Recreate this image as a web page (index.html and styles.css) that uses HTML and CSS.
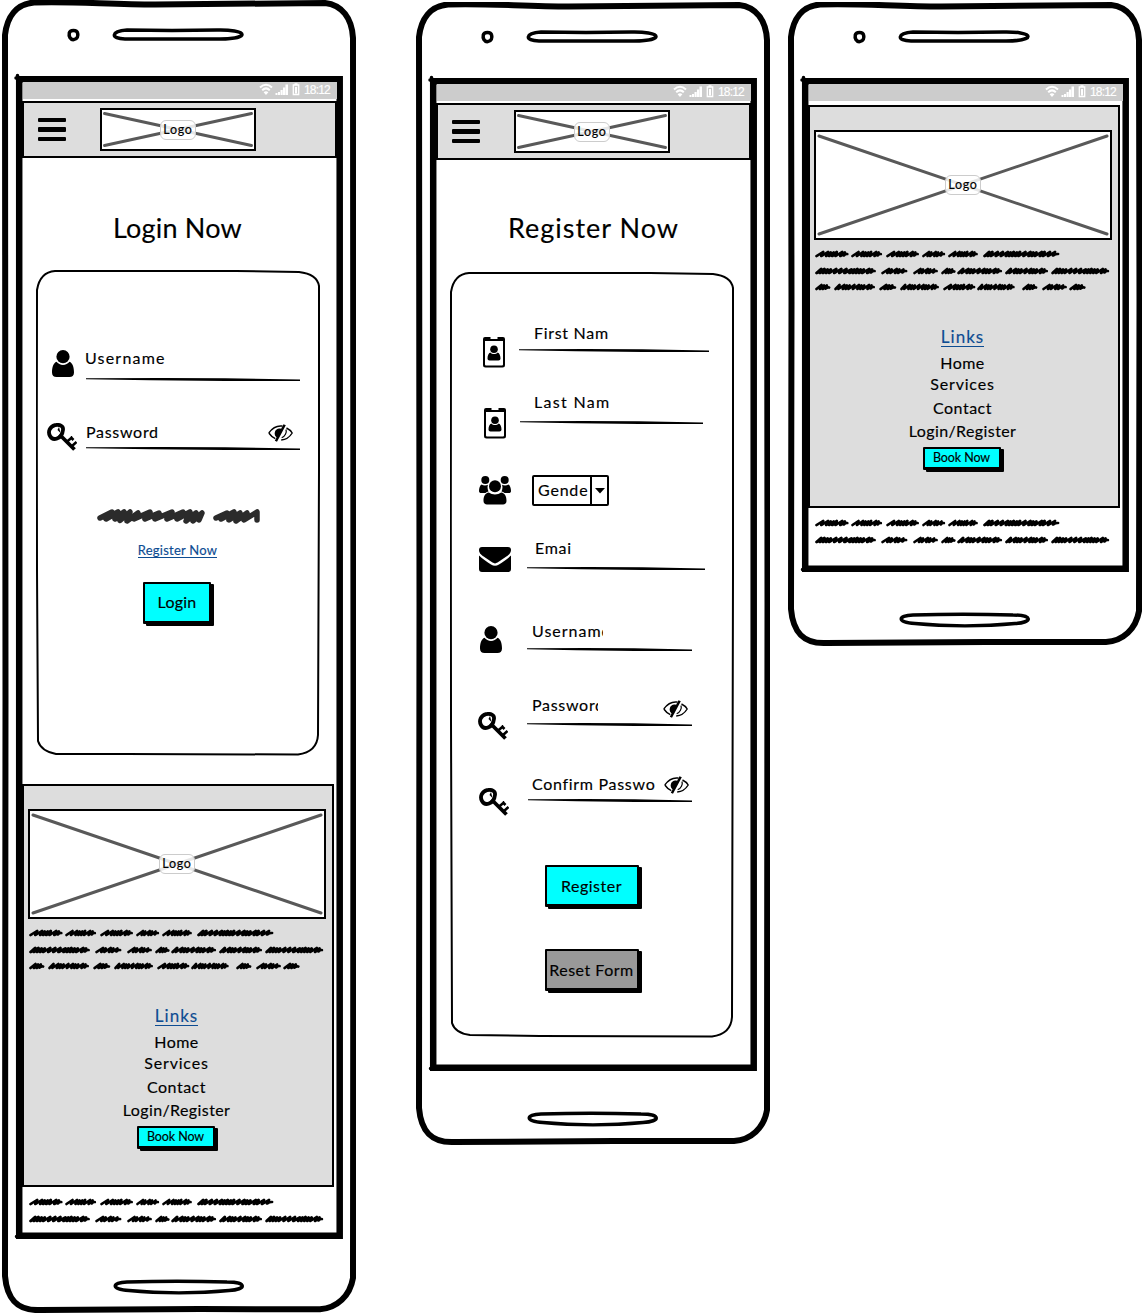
FILE: index.html
```html
<!DOCTYPE html>
<html lang="en">
<head>
<meta charset="utf-8">
<title>Mobile wireframes</title>
<link rel="stylesheet" href="styles.css">
</head>
<body>
<svg class="defs" width="0" height="0" aria-hidden="true">
  <defs>
    <path id="w15" d="M1.500 7l5-4-1.500 4 4-3.500-1.200 3.500 4-3.500-1.200 3.200q1.500-1.700 3.500-1.200"/>
    <path id="w24" d="M1.500 7l6-4-1.500 4 4-3.500-1.200 3.500 6-4-1.500 4 4-3.500-1.200 3.500 5-3.500-1 3q1.500-1.700 3.500-1.500"/>
    <path id="w31" d="M1.500 7l6-4-1.500 4 6-4-1.500 4 4-3.500-1.200 3.500 4-3.500-1.200 3.500 4-4-1 4 6-4-1.500 4 4-3.500-1 3q1.500-1.700 3.200-1.500"/>
    <path id="w42" d="M1.500 7l4-4-1.200 4 6-4-1.500 4 4-3.500-1.200 3.500 4-3.500-1.200 3.500 6-4-1.500 4 6-4-1.500 4 4-3.500-1.200 3.500 4-3.500-1.200 3.500 6-4-1.500 4 4-3.500-1 3q1.500-1.700 3.200-1.500"/>
    <path id="w58" d="M1.500 7l4-4-1.200 4 4-4-1.200 4 4-3.500-1.200 3.500 4-3.500-1.200 3.500 6-4-1.500 4 6-4-1.500 4 6-4-1.500 4 6-3.500-1.500 3.500 4-3.500-1.200 3.500 4-4-1.200 4 4-3.500-1.200 3.500 4-3.500-1.200 3.500 6-4-1.500 4 4-3.500-1 3q1.500-1.700 3.200-1.500"/>
    <path id="w76" d="M1.500 7l4-4-1.200 4 4-4-1.200 4 6-4-1.500 4 6-4-1.500 4 6-4-1.500 4 4-3.500-1.200 3.500 4-4-1.200 4 4-3.500-1.200 3.500 4-4-1.200 4 6-4-1.500 4 6-4-1.500 4 4-3.500-1.200 3.500 4-3.500-1.200 3.500 6-4-1.500 4 4-4-1.200 4 6-4-1.500 4 6-4-1.500 3.500q2-1.700 4.200-1.500"/>
    <symbol id="lines2" viewBox="0 0 296 26">
      <g fill="none" stroke="#000" stroke-width="2.700" stroke-linecap="round" stroke-linejoin="round">
        <use href="#w31" transform="scale(1.080 1)"/>
        <use href="#w31" transform="translate(36)"/>
        <use href="#w31" transform="translate(71) scale(1.060 1)"/>
        <use href="#w24" transform="translate(107) scale(.930 1)"/>
        <use href="#w31" transform="translate(133) scale(.960 1)"/>
        <use href="#w76" transform="translate(168) scale(1.120 1)"/>
        <use href="#w58" transform="translate(0 17) scale(1.130 1)"/>
        <use href="#w24" transform="translate(66 17) scale(1.060 1)"/>
        <use href="#w24" transform="translate(98 17)"/>
        <use href="#w15" transform="translate(126 17) scale(.950 1)"/>
        <use href="#w42" transform="translate(142 17) scale(1.100 1)"/>
        <use href="#w42" transform="translate(190 17) scale(1.050 1)"/>
        <use href="#w58" transform="translate(236 17) scale(1.080 1)"/>
      </g>
    </symbol>
    <symbol id="lines3" viewBox="0 0 296 43">
      <use href="#lines2" width="296" height="26"/>
      <g fill="none" stroke="#000" stroke-width="2.700" stroke-linecap="round" stroke-linejoin="round">
        <use href="#w15" transform="translate(0 33)"/>
        <use href="#w42" transform="translate(19 33)"/>
        <use href="#w15" transform="translate(64 33) scale(1.120 1)"/>
        <use href="#w42" transform="translate(85 33) scale(.950 1)"/>
        <use href="#w31" transform="translate(128 33) scale(1.040 1)"/>
        <use href="#w42" transform="translate(162 33) scale(.920 1)"/>
        <use href="#w15" transform="translate(207 33)"/>
        <use href="#w24" transform="translate(227 33)"/>
        <use href="#w15" transform="translate(254 33) scale(1.080 1)"/>
      </g>
    </symbol>
    <symbol id="user" viewBox="0 0 22 27">
      <circle cx="11" cy="6.700" r="6.600"/>
      <path d="M4.500 11.800C1.500 13 0 17 0 22.500 0 25.500 1.800 27 4.500 27h13c2.700 0 4.500-1.500 4.500-4.500 0-5.500-1.500-9.500-4.500-10.700-1.500 2-4 3.200-6.500 3.200s-5-1.200-6.500-3.200z"/>
    </symbol>
    <symbol id="key" viewBox="0 0 30 28">
      <g fill="none" stroke="#000">
        <path d="M3 13C.5 8.500 3 3.500 8 2.200c4.500-1.200 8.500 1 8 4.500-.4 4-2.500 7.500-6 8.800-2.800 1-5.600 0-7-2.500z" stroke-width="3.800"/>
        <path d="M12.500 11.500L27.500 26.500" stroke-width="3.800"/>
        <path d="M19.500 19l6-5M24.500 23.500l5-4.500M23.500 14l3 3" stroke-width="2.600"/>
      </g>
      <path d="M12 4l1.500 6-3-3z"/>
    </symbol>
    <symbol id="badge" viewBox="0 0 22 32">
      <path fill-rule="evenodd" d="M2 1h5.500v2h7V1H20a2 2 0 0 1 2 2V29a2.500 2.500 0 0 1-2.500 2.500h-17A2.500 2.500 0 0 1 0 29V3a2 2 0 0 1 2-2zM2 5V28.500a1 1 0 0 0 1 1h16a1 1 0 0 0 1-1V5z"/>
      <circle cx="11" cy="13.200" r="3.800"/>
      <path d="M7.300 16.500c-1.800.7-2.800 3-2.800 6 0 1.300.8 2 2 2h9c1.200 0 2-.7 2-2 0-3-1-5.300-2.800-6-2 2-5.400 2-7.400 0z"/>
    </symbol>
    <symbol id="users" viewBox="0 0 32 30">
      <circle cx="6.300" cy="5" r="4"/><circle cx="25.700" cy="5" r="4"/>
      <path d="M2.500 9.500C.8 10.500 0 13.500 0 16c0 1.400 1 2 2 2h4.500c.8-.9 1.800-1.400 3-1.600-1-2-1.300-4.400-.5-6.600-2 1-4.500 1-6.500-.3zM29.500 9.500c1.700 1 2.500 4 2.500 6.500 0 1.400-1 2-2 2h-4.500c-.8-.9-1.800-1.400-3-1.600 1-2 1.300-4.400.5-6.600 2 1 4.500 1 6.500-.3z"/>
      <circle cx="16" cy="11.200" r="6"/>
      <path d="M9.800 17.500C6 18 4.500 21.500 4.500 26c0 2.300 1.500 3.500 3.500 3.500h16c2 0 3.500-1.200 3.500-3.500 0-4.500-1.500-8-5.300-8.500-3.500 2.500-8.900 2.500-12.400 0z"/>
    </symbol>
    <symbol id="mail" viewBox="0 0 32 25">
      <path d="M3 0h26a3 3 0 0 1 3 3c0 2.500-1.500 4.300-3.500 5.700L18.500 15.600c-1.800 1.100-3.200 1.100-5 0L3.500 8.700C1.500 7.300 0 5.500 0 3a3 3 0 0 1 3-3z"/>
      <path d="M0 8.500c3.500 3.500 8 6.300 12 9 2.700 1.600 5.300 1.600 8 0 4-2.700 8.500-5.500 12-9V22a3 3 0 0 1-3 3H3a3 3 0 0 1-3-3z"/>
    </symbol>
    <symbol id="eye" viewBox="0 0 25 18">
      <path d="M.8 9C4 4.500 8 2 12.500 2h2M.8 9c1.800 2.600 4 4.500 6.500 5.700M18.500 4C21 5.200 23 7 24.200 9c-2.500 4-6.500 6.700-11 7" fill="none" stroke="#000" stroke-width="1.400"/>
      <path d="M15.500.2l2.300 1L9 17.800l-2.200-1z"/>
      <path d="M12.500 4.500c-4 0-5.800 2-5.800 5 0 2 .9 3.500 2.500 4.300l4.500-8.300z"/>
      <path d="M18 5.500c1 3-1 6.800-4.300 8.300" fill="none" stroke="#000" stroke-width="1.200"/>
    </symbol>
    <symbol id="rule" viewBox="0 0 200 3">
      <path d="M0 .3L70 0l60 .2L200 1.400V3H130L60 2.200 0 1.200z"/>
    </symbol>
    <symbol id="status" viewBox="0 0 42 13">
      <g fill="none" stroke="#fff" stroke-width="2">
        <path d="M1 4.500q6-5.500 12 0M3.200 7.200q3.800-3.700 7.600 0"/>
      </g>
      <path fill="#fff" d="M4.600 9.200q2.400-2 4.800 0L7 12zM16.500 10h2v2h-2zM19 9h2v3h-2zM21.500 7h2.200v5h-2.200zM24 4.500h2.200V12H24zM26.500 1.500H29V12h-2.500z"/>
      <path d="M34.300 2h5.400v9.500h-5.400zM35.500 1h3" fill="none" stroke="#fff" stroke-width="1.300"/>
      <path fill="#fff" d="M36 4h2v6.500h-2z"/>
    </symbol>
    <symbol id="phone-top" viewBox="0 0 356 80">
      <g fill="none" stroke="#000" stroke-width="3.500">
        <path d="M69.300 33c.8-3.500 7.500-3.500 8.300 0 .8 3-.2 6-3.800 6.600-3.600.4-5.200-3.400-4.500-6.600z"/>
        <path d="M127 30q45 .8 90 0c13-.3 25 1.200 25 4.500 0 3-12 4.500-22 4.500h-95c-15 0-14-8.200 2-9z"/>
      </g>
    </symbol>
    <symbol id="phone-home" viewBox="0 0 356 30">
      <path d="M127 11q50-1.500 100 0c20 0 20 7.500 2 8.500-30 3-70 3-100 0-18-.8-18-8-2-8.500z" fill="none" stroke="#000" stroke-width="3.500"/>
    </symbol>
  </defs>
</svg>

<main class="board">

  <section class="phone phone-login">
    <svg class="frame" viewBox="0 0 356 1313" width="356" height="1313">
      <g fill="none" stroke="#000">
        <path d="M5 35C7 17 16 4 34 2.500C70 1 110 4.500 155 4.500L325 3C342 5 352 18 353 38L353.500 700 353 1278C350 1296 337 1308 320 1309.300L200 1309 40 1310C17 1311 7 1299 5 1276L5.500 700z" stroke-width="6"/>
        <path d="M19.200 79.200H339.700V1235.700H19.200z" stroke-width="6.500"/>
        <path d="M16 78h4M17.500 75.500v4M16.500 1236.500h4" stroke-width="3.500" stroke-linecap="round"/>
      </g>
      <use href="#phone-top" width="356" height="80"/>
      <use href="#phone-home" y="1271" width="356" height="30"/>
    </svg>
    <div class="screen">
      <div class="statusbar"><svg width="42" height="13"><use href="#status"/></svg><span>18:12</span></div>
      <header class="topbar">
        <div class="menu"><i></i><i></i><i></i></div>
        <div class="logo logo-small">
          <svg viewBox="0 0 150 38" preserveAspectRatio="none"><path d="M2.500 3.500L147.500 34.500M147.500 3.500L2.500 34.500"/></svg>
          <span>Logo</span>
        </div>
      </header>
      <h1 class="title title-login">Login Now</h1>
      <div class="card card-login">
        <svg class="outline" viewBox="0 0 284 486"><path d="M1 20Q4 2 19 1L200 1 263 2Q281 4 283 16L283 200 282 465Q281 482 262 484.500L90 484 20 484Q5 481 2 471L1 300 .8 150z"/></svg>
        <div class="row l-user">
          <svg width="22" height="27"><use href="#user"/></svg>
          <div class="field"><span>Username</span><svg preserveAspectRatio="none" viewBox="0 0 200 3"><use href="#rule" width="200" height="3"/></svg></div>
        </div>
        <div class="row l-pass">
          <svg width="30" height="28"><use href="#key"/></svg>
          <div class="field"><div class="line"><span class="t-pass">Password</span><svg class="eye" width="25" height="18"><use href="#eye"/></svg></div><svg preserveAspectRatio="none" viewBox="0 0 200 3"><use href="#rule" width="200" height="3"/></svg></div>
        </div>
        <svg class="note" width="163" height="18" viewBox="0 0 163 18">
          <path d="M3 11L15 5 9 12 21 5 18 12 27 5 23 13.500 33 5 30 14 41 6 37 12 53 5 48 12 62 6 58 12 75 5 70 12 86 5 80 12 93 5 89 14 99 6 96 14 105 6 102 13M119 11L130 6 124 12 137 5 132 13 143 6 139 14 150 6 147 13 160 5V13"/>
        </svg>
        <a class="register-link">Register Now</a>
        <button class="btn btn-login">Login</button>
      </div>
      <footer class="footer footer-login">
        <div class="logo logo-large">
          <svg viewBox="0 0 294 106" preserveAspectRatio="none"><path d="M3 4L291 102M291 4L3 102"/></svg>
          <span>Logo</span>
        </div>
        <svg class="blurb" width="296" height="43"><use href="#lines3"/></svg>
        <nav class="links">
          <a class="links-head">Links</a>
          <a class="n-home">Home</a><a class="n-services">Services</a><a class="n-contact">Contact</a><a class="n-login">Login/Register</a>
        </nav>
        <button class="btn btn-book">Book Now</button>
      </footer>
      <svg class="legal" width="296" height="26"><use href="#lines2"/></svg>
    </div>
  </section>

  <section class="phone phone-register">
    <svg class="frame" viewBox="0 0 356 1145" width="356" height="1145">
      <g fill="none" stroke="#000">
        <path d="M5 35C7 17 16 4 34 2.500C70 1 110 4.500 155 4.500L325 3C342 5 352 18 353 38L353.500 600 353 1108C350 1126 337 1138 320 1139L200 1139 40 1140C17 1141 7 1129 5 1106L5.500 600z" stroke-width="6"/>
        <path d="M19.200 79.200H339.700V1065.700H19.200z" stroke-width="6.500"/>
        <path d="M16 78h4M17.500 75.500v4M16.500 1066.500h4" stroke-width="3.500" stroke-linecap="round"/>
      </g>
      <use href="#phone-top" width="356" height="80"/>
      <use href="#phone-home" y="1101" width="356" height="30"/>
    </svg>
    <div class="screen">
      <div class="statusbar"><svg width="42" height="13"><use href="#status"/></svg><span>18:12</span></div>
      <header class="topbar">
        <div class="menu"><i></i><i></i><i></i></div>
        <div class="logo logo-small">
          <svg viewBox="0 0 150 38" preserveAspectRatio="none"><path d="M2.500 3.500L147.500 34.500M147.500 3.500L2.500 34.500"/></svg>
          <span>Logo</span>
        </div>
      </header>
      <h1 class="title title-register">Register Now</h1>
      <div class="card card-register">
        <svg class="outline" viewBox="0 0 284 766"><path d="M1 20Q4 2 19 1L200 1 263 2Q281 4 283 16L283 300 282 745Q281 762 262 764.500L90 764 20 763Q5 761 2 751L1 450 .8 250z"/></svg>
        <div class="row r-first">
          <svg width="22" height="32"><use href="#badge"/></svg>
          <div class="field"><span>First Nam</span><svg preserveAspectRatio="none" viewBox="0 0 200 3"><use href="#rule" width="200" height="3"/></svg></div>
        </div>
        <div class="row r-last">
          <svg width="22" height="32"><use href="#badge"/></svg>
          <div class="field"><span>Last Nam</span><svg preserveAspectRatio="none" viewBox="0 0 200 3"><use href="#rule" width="200" height="3"/></svg></div>
        </div>
        <div class="row r-gender">
          <svg width="32" height="30"><use href="#users"/></svg>
          <div class="select"><span>Gende</span><b><svg width="10" height="6"><path d="M0 0h10L5 5.500z"/></svg></b></div>
        </div>
        <div class="row r-email">
          <svg width="32" height="25"><use href="#mail"/></svg>
          <div class="field"><span>Emai</span><svg preserveAspectRatio="none" viewBox="0 0 200 3"><use href="#rule" width="200" height="3"/></svg></div>
        </div>
        <div class="row r-user">
          <svg width="22" height="27"><use href="#user"/></svg>
          <div class="field"><span>Username</span><svg preserveAspectRatio="none" viewBox="0 0 200 3"><use href="#rule" width="200" height="3"/></svg></div>
        </div>
        <div class="row r-pass">
          <svg width="30" height="28"><use href="#key"/></svg>
          <div class="field"><div class="line"><span class="t-pass">Password</span><svg class="eye" width="25" height="18"><use href="#eye"/></svg></div><svg preserveAspectRatio="none" viewBox="0 0 200 3"><use href="#rule" width="200" height="3"/></svg></div>
        </div>
        <div class="row r-confirm">
          <svg width="30" height="28"><use href="#key"/></svg>
          <div class="field"><div class="line"><span>Confirm Passwo</span><svg class="eye" width="25" height="18"><use href="#eye"/></svg></div><svg preserveAspectRatio="none" viewBox="0 0 200 3"><use href="#rule" width="200" height="3"/></svg></div>
        </div>
        <button class="btn btn-register">Register</button>
        <button class="btn btn-reset">Reset Form</button>
      </div>
    </div>
  </section>

  <section class="phone phone-footer">
    <svg class="frame" viewBox="0 0 356 645" width="356" height="645">
      <g fill="none" stroke="#000">
        <path d="M5 35C7 17 16 4 34 2.500C70 1 110 4.500 155 4.500L325 3C342 5 352 18 353 38L353.500 300 353 609C350 627 337 639 320 640L200 640 40 641C17 642 7 630 5 607L5.500 300z" stroke-width="6"/>
        <path d="M19.200 79.200H339.700V566.700H19.200z" stroke-width="6.500"/>
        <path d="M16 78h4M17.500 75.500v4M16.500 567.500h4" stroke-width="3.500" stroke-linecap="round"/>
      </g>
      <use href="#phone-top" width="356" height="80"/>
      <use href="#phone-home" y="602" width="356" height="30"/>
    </svg>
    <div class="screen">
      <div class="statusbar"><svg width="42" height="13"><use href="#status"/></svg><span>18:12</span></div>
      <footer class="footer footer-only">
        <div class="logo logo-large">
          <svg viewBox="0 0 294 106" preserveAspectRatio="none"><path d="M3 4L291 102M291 4L3 102"/></svg>
          <span>Logo</span>
        </div>
        <svg class="blurb" width="296" height="43"><use href="#lines3"/></svg>
        <nav class="links">
          <a class="links-head">Links</a>
          <a class="n-home">Home</a><a class="n-services">Services</a><a class="n-contact">Contact</a><a class="n-login">Login/Register</a>
        </nav>
        <button class="btn btn-book">Book Now</button>
      </footer>
      <svg class="legal" width="296" height="26"><use href="#lines2"/></svg>
    </div>
  </section>

</main>
</body>
</html>
```

FILE: styles.css
```css
* { box-sizing: border-box; }
body {
  margin: 0;
  background: #fff;
  color: #000;
  font: 16px/20px Lato, "Open Sans", sans-serif;
  letter-spacing: 0.5px;
  white-space: nowrap;
  overflow: hidden;
  -webkit-text-stroke: 0.15px;
}
svg { display: block; flex: none; }
.defs { position: absolute; }

.board { display: flex; align-items: flex-start; height: 1313px; }
.phone { position: relative; flex: none; width: 356px; padding: 82px 19px 0 22px; }
.phone-login { height: 1313px; }
.phone-register { height: 1145px; margin: 2px 0 0 58px; }
.phone-footer { height: 645px; margin: 2px 0 0 16px; }
.frame { position: absolute; left: 0; top: 0; }
.screen { position: relative; display: flex; flex-direction: column; }

.statusbar {
  display: flex;
  align-items: center;
  justify-content: flex-end;
  gap: 3px;
  height: 17px;
  margin-left: 1px;
  padding: 0 6px 2px 0;
  background: #ccc;
  color: #fff;
  font: 500 12px/14px "Liberation Sans", Arial, sans-serif;
  letter-spacing: -0.8px;
}
.statusbar span { padding-right: 1px; }

.topbar {
  display: flex;
  align-items: flex-start;
  height: 57px;
  margin-top: 2px;
  padding: 5px 0 0 14px;
  background: #ddd;
  border: 2px solid #000;
}
.menu { display: flex; flex-direction: column; gap: 5px; padding-top: 10px; }
.menu i { width: 28px; height: 4.400px; border-radius: 1px; background: #000; }

.logo {
  display: grid;
  place-items: center;
  background: #fff;
  border: 2px solid #000;
}
.logo > svg {
  grid-area: 1 / 1;
  width: 100%;
  height: 100%;
  fill: none;
  stroke: #595959;
  stroke-width: 3;
  stroke-linecap: round;
}
.logo > span {
  grid-area: 1 / 1;
  z-index: 1;
  width: 36px;
  height: 20px;
  border: 1px solid #ccc;
  border-radius: 6px;
  background: rgba(255, 255, 255, 0.85);
  font-size: 12.500px;
  line-height: 17px;
  letter-spacing: 0.7px;
  text-align: center;
}
.logo-small { width: 156px; height: 43px; margin-left: 34px; }
.logo-large { width: 298px; height: 110px; }

.title {
  margin: 54px 0 0;
  font-size: 27px;
  font-weight: 400;
  line-height: 32px;
  text-align: center;
}
.title-login { padding-right: 4px; letter-spacing: 0.2px; }
.title-register { margin-top: 52px; padding-right: 0; letter-spacing: 1px; }

.card {
  position: relative;
  display: flex;
  flex-direction: column;
  align-items: center;
  width: 284px;
  margin: 26px 0 0 14px;
}
.card-login { height: 486px; }
.card-register { height: 766px; margin-top: 28px; }
.outline {
  position: absolute;
  left: 0;
  top: 0;
  width: 100%;
  height: 100%;
  fill: none;
  stroke: #000;
  stroke-width: 2;
}

.row { display: flex; align-items: flex-start; align-self: flex-start; flex: none; }
.field { display: flex; flex-direction: column; justify-content: space-between; flex: none; letter-spacing: 0.7px; }
.field > svg { width: 100%; height: 3px; }
.line { display: flex; justify-content: space-between; }

.l-user { height: 32px; margin-top: 78px; padding-left: 16px; }
.l-user > svg { margin-top: 2px; }
.l-user .field { width: 214px; height: 33px; margin-left: 12px; letter-spacing: 1.200px; }
.l-user span { margin-left: -1px; }
.l-pass { height: 30px; margin-top: 42px; padding-left: 11px; }
.l-pass > svg { margin-top: 1px; }
.l-pass .field { width: 214px; height: 28px; margin-left: 9px; }
.l-pass .eye { margin: 2px 7px 0 0; }
.note { margin: 55px 0 0; fill: none; stroke: #2b2b2b; stroke-width: 5.500; stroke-linejoin: round; stroke-linecap: round; }
.register-link {
  height: 17px;
  margin: 16px 1px 0 0;
  border-bottom: 1px solid #0d4c92;
  color: #0d4c92;
  font-size: 13px;
  line-height: 18px;
  letter-spacing: 0.25px;
}

.r-first { height: 46px; margin-top: 51px; padding-left: 33px; }
.r-first > svg { margin-top: 13px; }
.r-first .field { width: 190px; height: 29px; margin-left: 14px; }
.r-first span { padding-left: 15px; }
.r-last { height: 50px; margin-top: 23px; padding-left: 34px; }
.r-last > svg { margin-top: 15px; }
.r-last .field { width: 183px; height: 32px; margin-left: 14px; letter-spacing: 1.300px; }
.r-last span { padding-left: 14px; }
.r-gender { height: 35px; margin-top: 31px; padding-left: 29px; }
.r-gender > svg { margin-top: 2px; }
.r-email { height: 36px; margin-top: 30px; padding-left: 29px; }
.r-email > svg { margin-top: 9px; }
.r-email .field { width: 178px; height: 32px; margin-left: 16px; }
.r-email span { padding-left: 8px; }
.r-user { height: 34px; margin-top: 47px; padding-left: 30px; }
.r-user > svg { margin-top: 5px; }
.r-user .field { width: 165px; height: 30px; margin-left: 25px; letter-spacing: 1px; }
.r-user span { width: 76px; padding-left: 5px; overflow: hidden; }
.r-pass { height: 47px; margin-top: 40px; padding-left: 28px; }
.r-pass > svg { margin-top: 17px; }
.r-pass .field { width: 165px; height: 31px; margin-left: 19px; }
.r-pass span { width: 71px; padding-left: 5px; overflow: hidden; }
.r-pass .eye { margin: 5px 4px 0 0; }
.r-confirm { height: 44px; margin-top: 32px; padding-left: 29px; }
.r-confirm > svg { margin-top: 14px; }
.r-confirm .field { width: 164px; height: 28px; margin-left: 19px; }
.r-confirm span { padding-left: 4px; }
.r-confirm .eye { margin: 2px 3px 0 0; }

.select {
  display: flex;
  width: 77px;
  height: 31px;
  margin: 2px 0 0 21px;
  border: 2px solid #000;
  border-radius: 2px;
  line-height: 26px;
}
.select span { width: 56px; padding-left: 4px; letter-spacing: 0.8px; }
.select b { display: grid; flex: 1; place-items: center; border-left: 2px solid #000; }

.btn {
  flex: none;
  padding: 0;
  border: 2px solid #000;
  border-bottom-width: 3px;
  border-radius: 1px;
  background: #0ff;
  box-shadow: 3px 2px 0 #000;
  color: #000;
  font: inherit;
  letter-spacing: inherit;
}
.btn-login { width: 68px; height: 42px; margin: 24px 2px 0 0; padding-bottom: 2px; letter-spacing: 0.2px; }
.btn-register { width: 94px; height: 42px; margin: 47px 1px 0 0; }
.btn-reset { width: 94px; height: 42px; margin: 42px 1px 0 0; background: #999; }
.btn-book { width: 78px; height: 23px; margin: 6px 3px 0 0; font-size: 12.500px; line-height: 18px; letter-spacing: -0.1px; }

.footer {
  display: flex;
  flex-direction: column;
  align-items: center;
  width: 312px;
  height: 403px;
  padding: 23px 2px 0 0;
  background: #ddd;
  border: 2px solid #000;
}
.footer-login { margin-top: 28px; }
.footer-only { margin-top: 4px; }
.blurb { margin: 9px 1px 0 0; }
.links { display: flex; flex-direction: column; align-items: center; margin-right: 1px; }
.links-head {
  height: 20px;
  margin-top: 35px;
  border-bottom: 1px solid #0d4c92;
  color: #0d4c92;
  font-size: 17px;
  letter-spacing: 1px;
}
.n-home { margin-top: 6px; }
.n-services { margin-top: 1px; letter-spacing: 0.8px; }
.n-contact { margin-top: 4px; }
.n-login { margin-top: 3px; letter-spacing: 0.4px; }
.legal { margin: 10px 0 0 7px; }
```
